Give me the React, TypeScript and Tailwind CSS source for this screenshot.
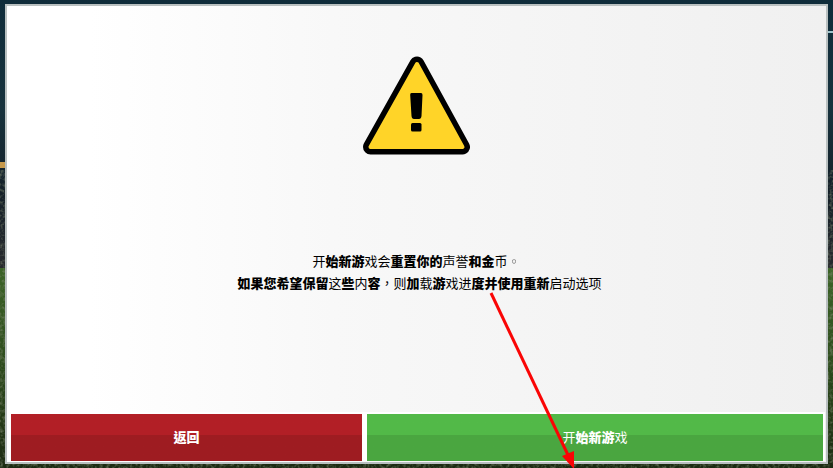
import { clsx } from 'clsx';

// --- Types ---
interface TextRun {
  text: string;
  heavy?: boolean;
  faint?: boolean;
}

// --- Copy ---
const RESET_LINE: TextRun[] = [
  { text: '开' },
  { text: '始新游', heavy: true },
  { text: '戏会' },
  { text: '重置你的', heavy: true },
  { text: '声誉' },
  { text: '和金', heavy: true },
  { text: '币' },
  { text: '。', faint: true },
];

const KEEP_LINE: TextRun[] = [
  { text: '如果您希望保留', heavy: true },
  { text: '这' },
  { text: '些', heavy: true },
  { text: '内' },
  { text: '容', heavy: true },
  { text: '，则' },
  { text: '加', heavy: true },
  { text: '载' },
  { text: '游', heavy: true },
  { text: '戏进' },
  { text: '度并使用重新', heavy: true },
  { text: '启动选项' },
];

const BACK_LABEL: TextRun[] = [{ text: '返回', heavy: true }];

const START_LABEL: TextRun[] = [
  { text: '开' },
  { text: '始新游', heavy: true },
  { text: '戏' },
];

// --- Components ---
function Runs({ runs }: { runs: TextRun[] }) {
  return (
    <>
      {runs.map((run, i) => (
        <span key={i} className={clsx(run.heavy && 'font-black', run.faint && 'opacity-50')}>
          {run.text}
        </span>
      ))}
    </>
  );
}

function WarningIcon() {
  return (
    <svg viewBox="0 0 108 100" className="h-[100px] w-[108px]" aria-hidden="true">
      <path d="M54 8 L99.500 91 H7.500 Z" fill="#000" stroke="#000" strokeWidth="15" strokeLinejoin="round" />
      <path d="M54 8 L99.500 91 H7.500 Z" fill="#ffd428" stroke="#ffd428" strokeWidth="4" strokeLinejoin="round" />
      <path
        d="M48.500 37 H58 Q59.500 37 59.500 39 L58.500 60 Q58.200 63 56 63 H51 Q48.800 63 48.500 60 L47.200 39 Q47 37 48.500 37 Z"
        fill="#000"
      />
      <rect x="48" y="67" width="10.500" height="8.500" rx="1.500" fill="#000" />
    </svg>
  );
}

// Stadium at night: dark stands on top, floodlights, pitch below
function Stadium() {
  return (
    <svg
      viewBox="0 0 833 468"
      preserveAspectRatio="none"
      className="absolute inset-0 h-full w-full"
      aria-hidden="true"
    >
      <defs>
        <linearGradient id="stands" x1="0" y1="0" x2="0" y2="1">
          <stop offset="0" stopColor="#0f2c3a" />
          <stop offset="0.4" stopColor="#17323d" />
          <stop offset="0.7" stopColor="#142029" />
          <stop offset="1" stopColor="#282a2e" />
        </linearGradient>
        <linearGradient id="pitch" x1="0" y1="0" x2="0" y2="1">
          <stop offset="0" stopColor="#3c6428" />
          <stop offset="0.5" stopColor="#2c4a1c" />
          <stop offset="1" stopColor="#1b2a12" />
        </linearGradient>
        <filter id="grass" x="0" y="0" width="1" height="1">
          <feTurbulence type="fractalNoise" baseFrequency="0.3" numOctaves="2" seed="4" />
          <feColorMatrix values="0 0 0 0 0.2  0 0 0 0 0.24  0 0 0 0 0.15  1.500 0 0 0 -0.650" />
        </filter>
      </defs>
      <rect width="833" height="270" fill="url(#stands)" />
      <rect y="268" width="833" height="200" fill="url(#pitch)" />
      <rect y="170" width="833" height="298" filter="url(#grass)" />
      <rect y="162" width="5" height="6" fill="#c89a4c" />
      <rect x="828" y="31" width="5" height="2" fill="#9fc4cc" />
    </svg>
  );
}

function PointerArrow() {
  return (
    <svg
      viewBox="0 0 833 468"
      preserveAspectRatio="none"
      className="pointer-events-none absolute inset-0 h-full w-full"
      aria-hidden="true"
    >
      <path d="M491 293 L568 455" stroke="#fa0505" strokeWidth="3" />
      <path d="M574 469 L562 456 L574 451 Z" fill="#fa0505" />
    </svg>
  );
}

function App() {
  return (
    <div
      lang="zh-TW"
      className="relative flex h-screen flex-col bg-[#142029] px-[5px] py-1 font-['Noto_Sans_CJK_TC','Noto_Sans_CJK_SC',sans-serif] text-[13px] leading-[22px]"
    >
      <Stadium />

      <main className="relative flex flex-1 flex-col border-2 border-[#b9c0c0] bg-linear-to-r from-white from-10% via-[#f8f8f8] via-40% to-[#f0f0f0] p-px">
        <div className="flex flex-1 flex-col items-center px-4 pt-[49px] text-black">
          <WarningIcon />
          <div className="mt-[94px] text-center">
            <p>
              <Runs runs={RESET_LINE} />
            </p>
            <p className="pl-1.5">
              <Runs runs={KEEP_LINE} />
            </p>
          </div>
        </div>

        <div className="flex gap-[5px] border-t-2 border-r-2 border-l-3 border-white bg-white">
          <button
            type="button"
            className="h-[47px] flex-10 bg-linear-to-b from-[#b21f26] from-45% to-[#9e1c21] to-45% pb-0.5 text-white"
          >
            <Runs runs={BACK_LABEL} />
          </button>
          <button
            type="button"
            className="h-[47px] flex-13 bg-linear-to-b from-[#52b948] from-45% to-[#4aa640] to-45% pb-0.5 text-white"
          >
            <Runs runs={START_LABEL} />
          </button>
        </div>
      </main>

      <PointerArrow />
    </div>
  );
}

export default App;
